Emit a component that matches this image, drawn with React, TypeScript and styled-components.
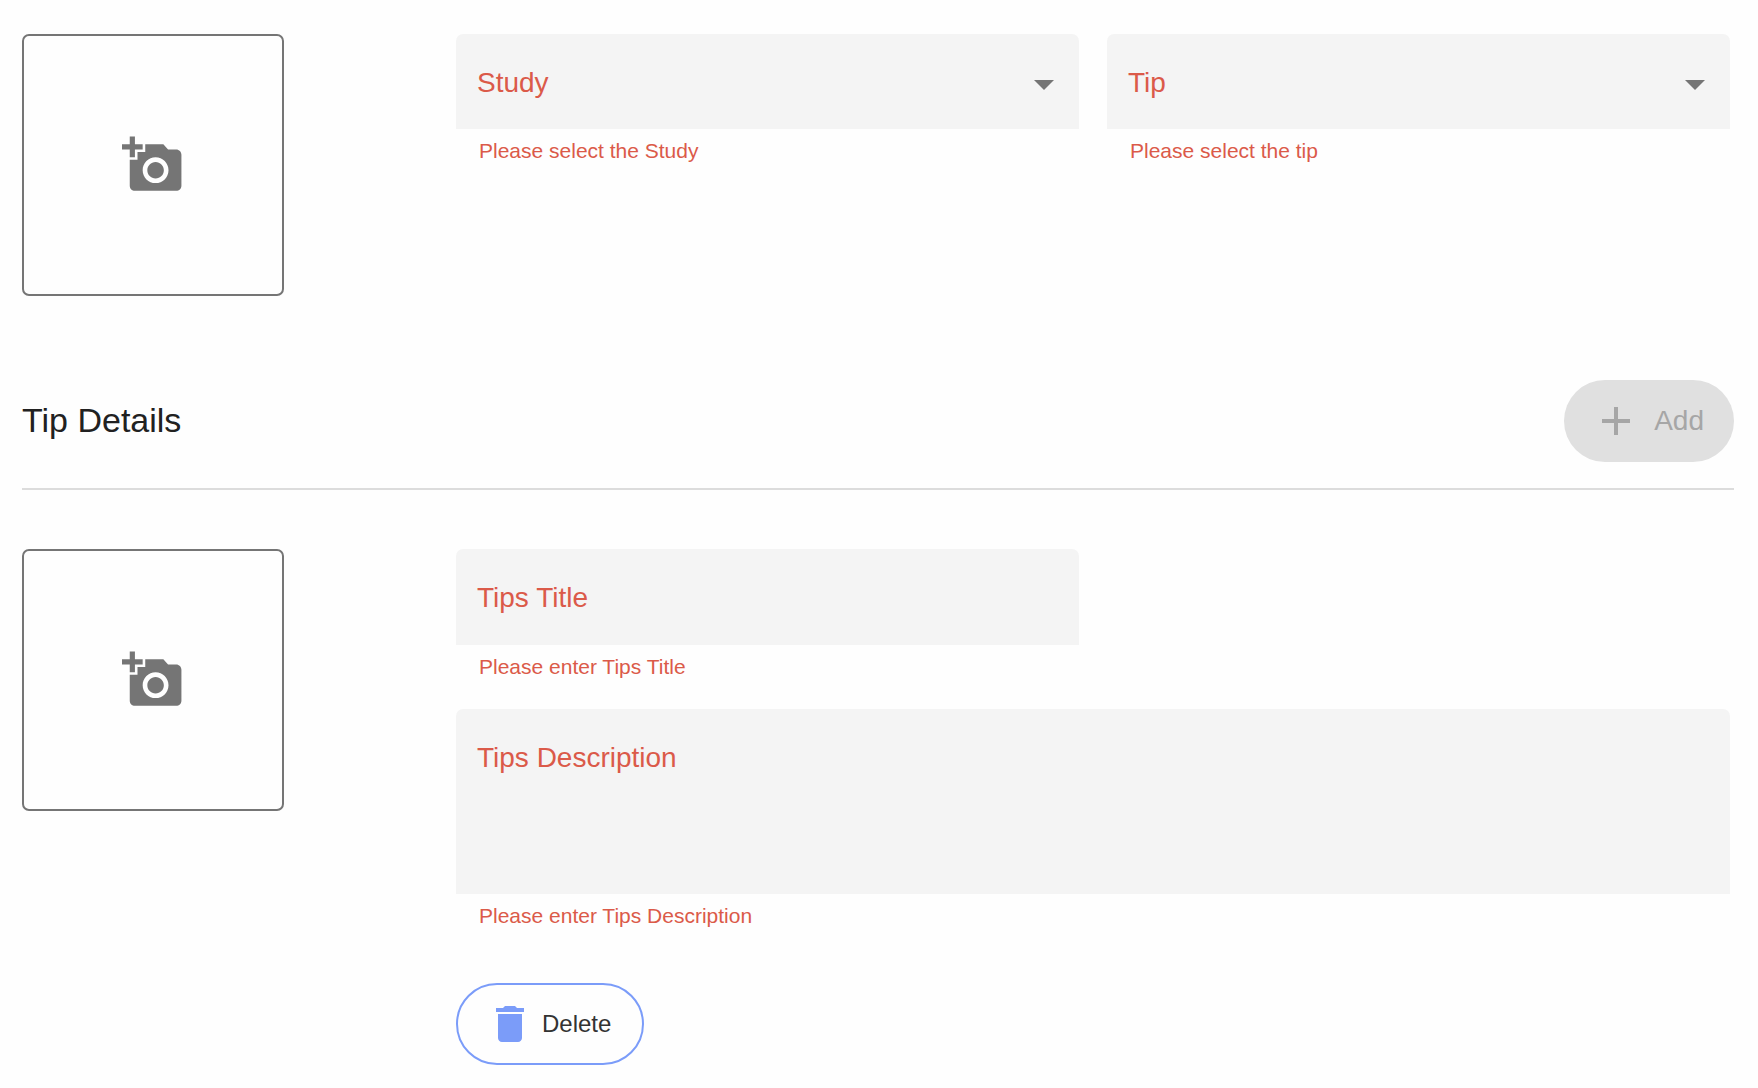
import React, { useId } from "react";
import styled, { createGlobalStyle, css } from "styled-components";
import { MdAdd, MdAddAPhoto, MdDelete } from "react-icons/md";

const colors = {
  error: "#db5a49",
  field: "#f4f4f4",
  grey: "#757575",
  divider: "#dcdcdc",
  text: "#212121",
  accent: "#7b9cf9",
};

const GlobalStyle = createGlobalStyle`
  *, *::before, *::after { box-sizing: border-box; }
  body {
    margin: 0;
    background: #fefefe;
    color: ${colors.text};
    font-family: "Liberation Sans", Arial, sans-serif;
  }
  button, input, select, textarea { font: inherit; }
`;

const Page = styled.main`
  padding: 34px 24px 22px 22px;
`;

const FormRow = styled.section`
  display: grid;
  grid-template-columns: repeat(4, minmax(0, 1fr));
  column-gap: 28px;
  align-items: start;
  padding-right: 4px;
`;

const PhotoButton = styled.button`
  display: flex;
  align-items: center;
  justify-content: center;
  width: 262px;
  height: 262px;
  padding: 0;
  border: 2px solid ${colors.grey};
  border-radius: 7px;
  background: transparent;
  color: ${colors.grey};
  cursor: pointer;
`;

const Fields = styled.div`
  grid-column: span 3;
  display: grid;
  grid-template-columns: repeat(2, minmax(0, 1fr));
  gap: 30px 28px;
`;

const FieldRoot = styled.div<{ $wide?: boolean }>`
  grid-column: ${(p) => (p.$wide ? "1 / -1" : "auto")};
`;

const FieldBox = styled.div`
  display: grid;
  background: ${colors.field};
  border-radius: 7px 7px 0 0;
  color: ${colors.error};

  > * {
    grid-area: 1 / 1;
  }
`;

const FieldLabel = styled.label`
  align-self: start;
  padding: 33px 21px 0;
  font-size: 28px;
  line-height: 32px;
  pointer-events: none;
`;

const controlStyle = css`
  display: block;
  width: 100%;
  margin: 0;
  padding: 33px 21px 30px;
  border: 0;
  border-radius: 7px 7px 0 0;
  outline: 0;
  background: transparent;
  color: ${colors.text};
  font-size: 28px;
  line-height: 32px;
`;

const SelectControl = styled.select`
  ${controlStyle}
  appearance: none;
  height: 95px;
`;

const InputControl = styled.input`
  ${controlStyle}
  height: 96px;
`;

const TextControl = styled.textarea`
  ${controlStyle}
  height: 185px;
  resize: none;
`;

const Caret = styled.svg`
  place-self: center end;
  margin: 7px 25px 0 0;
  fill: ${colors.grey};
  pointer-events: none;
`;

const HelperText = styled.p`
  margin: 10px 0 0;
  padding-left: 23px;
  color: ${colors.error};
  font-size: 21px;
  line-height: 24px;
`;

const SectionHeader = styled.header`
  display: flex;
  align-items: center;
  justify-content: space-between;
  margin: 84px 0 59px;
  padding-bottom: 26px;
  border-bottom: 2px solid ${colors.divider};
`;

const SectionTitle = styled.h2`
  margin: 0;
  padding-bottom: 2px;
  font-size: 34px;
  font-weight: 400;
  line-height: 38px;
`;

const PillButton = styled.button`
  display: inline-flex;
  align-items: center;
  height: 82px;
  border-radius: 41px;
`;

const AddButton = styled(PillButton)`
  gap: 14px;
  padding: 0 30px 0 28px;
  border: 0;
  background: #e0e0e0;
  color: #a6a6a6;
  font-size: 28px;
`;

const DeleteButton = styled(PillButton)`
  gap: 8px;
  padding: 0 31px 0 28px;
  border: 2px solid ${colors.accent};
  background: transparent;
  color: #333333;
  font-size: 24px;
  cursor: pointer;

  svg {
    color: ${colors.accent};
  }
`;

const Actions = styled.div`
  grid-column: 1 / -1;
  padding-top: 25px;
`;

type FieldProps = {
  kind: "select" | "input" | "textarea";
  label: string;
  helper: string;
  wide?: boolean;
};

function Field({ kind, label, helper, wide }: FieldProps) {
  const id = useId();
  const helperId = `${id}-helper`;
  const shared = { id, "aria-invalid": true, "aria-describedby": helperId };

  return (
    <FieldRoot $wide={wide}>
      <FieldBox>
        {kind === "select" && (
          <SelectControl {...shared} defaultValue="">
            <option value="" />
          </SelectControl>
        )}
        {kind === "input" && <InputControl {...shared} type="text" />}
        {kind === "textarea" && <TextControl {...shared} />}
        <FieldLabel htmlFor={id}>{label}</FieldLabel>
        {kind === "select" && (
          <Caret width="20" height="10" viewBox="0 0 20 10" aria-hidden="true">
            <path d="M0 0h20L10 10z" />
          </Caret>
        )}
      </FieldBox>
      <HelperText id={helperId}>{helper}</HelperText>
    </FieldRoot>
  );
}

function PhotoPicker() {
  return (
    <PhotoButton type="button" aria-label="Add photo">
      <MdAddAPhoto size={62} />
    </PhotoButton>
  );
}

export default function App() {
  return (
    <>
      <GlobalStyle />
      <Page>
        <FormRow>
          <PhotoPicker />
          <Fields>
            <Field kind="select" label="Study" helper="Please select the Study" />
            <Field kind="select" label="Tip" helper="Please select the tip" />
          </Fields>
        </FormRow>

        <SectionHeader>
          <SectionTitle>Tip Details</SectionTitle>
          <AddButton type="button" disabled>
            <MdAdd size={48} />
            Add
          </AddButton>
        </SectionHeader>

        <FormRow>
          <PhotoPicker />
          <Fields>
            <Field kind="input" label="Tips Title" helper="Please enter Tips Title" />
            <Field
              kind="textarea"
              label="Tips Description"
              helper="Please enter Tips Description"
              wide
            />
            <Actions>
              <DeleteButton type="button">
                <MdDelete size={48} />
                Delete
              </DeleteButton>
            </Actions>
          </Fields>
        </FormRow>
      </Page>
    </>
  );
}
